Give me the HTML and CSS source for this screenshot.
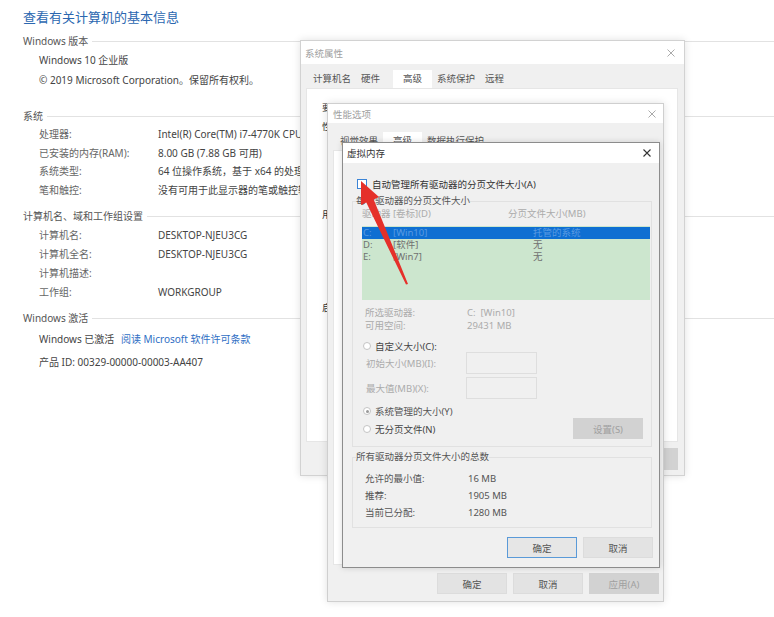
FILE: index.html
```html
<!DOCTYPE html>
<html lang="zh-CN">
<head>
<meta charset="utf-8">
<title>系统</title>
<link rel="stylesheet" href="styles.css">
</head>
<body>
<main class="page">
  <h1 class="title">查看有关计算机的基本信息</h1>

  <section class="sec sec-edition">
    <div class="sec-head"><span>Windows 版本</span></div>
    <div class="rows">
      <div class="row">Windows 10 企业版</div>
      <div class="row">© 2019 Microsoft Corporation。保留所有权利。</div>
    </div>
  </section>

  <section class="sec sec-system">
    <div class="sec-head"><span>系统</span></div>
    <dl class="kv">
      <div class="kv-row"><dt>处理器:</dt><dd>Intel(R) Core(TM) i7-4770K CPU @ 3.50GHz</dd></div>
      <div class="kv-row"><dt>已安装的内存(RAM):</dt><dd>8.00 GB (7.88 GB 可用)</dd></div>
      <div class="kv-row"><dt>系统类型:</dt><dd>64 位操作系统，基于 x64 的处理器</dd></div>
      <div class="kv-row"><dt>笔和触控:</dt><dd>没有可用于此显示器的笔或触控输入</dd></div>
    </dl>
  </section>

  <section class="sec sec-network">
    <div class="sec-head"><span>计算机名、域和工作组设置</span></div>
    <dl class="kv">
      <div class="kv-row"><dt>计算机名:</dt><dd>DESKTOP-NJEU3CG</dd></div>
      <div class="kv-row"><dt>计算机全名:</dt><dd>DESKTOP-NJEU3CG</dd></div>
      <div class="kv-row"><dt>计算机描述:</dt><dd></dd></div>
      <div class="kv-row"><dt>工作组:</dt><dd>WORKGROUP</dd></div>
    </dl>
  </section>

  <section class="sec sec-activation">
    <div class="sec-head"><span>Windows 激活</span></div>
    <div class="act-row">Windows 已激活 <span class="link">阅读 Microsoft 软件许可条款</span></div>
    <div class="act-row">产品 ID: 00329-00000-00003-AA407</div>
  </section>
</main>

<!-- 系统属性 -->
<div class="win win-sys">
  <div class="win-bar bar-sys">
    <span class="win-title">系统属性</span>
    <svg class="win-x" width="8" height="8" viewBox="0 0 8 8"><path d="M0.5 0.5L7.5 7.5M7.5 0.5L0.5 7.5" stroke="currentColor" stroke-width="1"/></svg>
  </div>
  <div class="tabs tabs-sys">
    <span class="tab">计算机名</span>
    <span class="tab">硬件</span>
    <span class="tab active">高级</span>
    <span class="tab">系统保护</span>
    <span class="tab">远程</span>
  </div>
  <div class="panel panel-sys">
    <p class="ptxt p1">要</p>
    <p class="ptxt p2">性</p>
    <p class="ptxt p3">用</p>
    <p class="ptxt p4">启</p>
  </div>
  <div class="btns btns-sys">
    <span class="btn disabled"></span>
  </div>
</div>

<!-- 性能选项 -->
<div class="win win-perf">
  <div class="win-bar bar-perf">
    <span class="win-title">性能选项</span>
    <svg class="win-x" width="8" height="8" viewBox="0 0 8 8"><path d="M0.5 0.5L7.5 7.5M7.5 0.5L0.5 7.5" stroke="currentColor" stroke-width="1"/></svg>
  </div>
  <div class="tabs tabs-perf">
    <span class="tab">视觉效果</span>
    <span class="tab active">高级</span>
    <span class="tab">数据执行保护</span>
  </div>
  <div class="panel panel-perf"></div>
  <div class="btns btns-perf">
    <span class="btn">确定</span>
    <span class="btn">取消</span>
    <span class="btn disabled">应用(A)</span>
  </div>
</div>

<!-- 虚拟内存 -->
<div class="win win-vm">
  <div class="win-bar bar-vm">
    <span class="win-title vm-title">虚拟内存</span>
    <svg class="win-x vm-x" width="8" height="8" viewBox="0 0 8 8"><path d="M0.5 0.5L7.5 7.5M7.5 0.5L0.5 7.5" stroke="currentColor" stroke-width="1.1"/></svg>
  </div>
  <div class="vm-body">
    <div class="check-row">
      <span class="checkbox"></span>
      <span>自动管理所有驱动器的分页文件大小(A)</span>
    </div>

    <fieldset class="gb gb-drives">
      <legend>每个驱动器的分页文件大小</legend>
      <div class="gb-inner">
        <div class="list-head">
          <span class="lh-drive">驱动器 [卷标](D)</span>
          <span>分页文件大小(MB)</span>
        </div>
        <div class="list">
          <div class="li selected"><span class="c-l">C:</span><span class="c-n">[Win10]</span><span>托管的系统</span></div>
          <div class="li"><span class="c-l">D:</span><span class="c-n">[软件]</span><span>无</span></div>
          <div class="li"><span class="c-l">E:</span><span class="c-n">[Win7]</span><span>无</span></div>
        </div>
        <div class="info">
          <div class="info-row"><span class="info-k">所选驱动器:</span><span>C:&nbsp;&nbsp;[Win10]</span></div>
          <div class="info-row"><span class="info-k">可用空间:</span><span>29431 MB</span></div>
        </div>
        <div class="radio-row r-custom"><span class="radio"></span><span>自定义大小(C):</span></div>
        <div class="input-row ir1"><span class="input-k">初始大小(MB)(I):</span><span class="input"></span></div>
        <div class="input-row ir2"><span class="input-k">最大值(MB)(X):</span><span class="input"></span></div>
        <div class="radio-row r-system"><span class="radio on"></span><span>系统管理的大小(Y)</span></div>
        <div class="radio-row r-none">
          <span class="radio"></span><span>无分页文件(N)</span>
          <span class="btn disabled set-btn">设置(S)</span>
        </div>
      </div>
    </fieldset>

    <fieldset class="gb gb-total">
      <legend>所有驱动器分页文件大小的总数</legend>
      <div class="total">
        <div class="t-row"><span class="t-k">允许的最小值:</span><span>16 MB</span></div>
        <div class="t-row"><span class="t-k">推荐:</span><span>1905 MB</span></div>
        <div class="t-row"><span class="t-k">当前已分配:</span><span>1280 MB</span></div>
      </div>
    </fieldset>

    <div class="btns btns-vm">
      <span class="btn default">确定</span>
      <span class="btn">取消</span>
    </div>
  </div>
</div>

<svg class="arrow" width="774" height="617" viewBox="0 0 774 617">
  <polygon points="361,181 379,197 373.7,199.4 408,284 406,284.5 366.3,202.6 361,205" fill="#e5302a"/>
</svg>
</body>
</html>
```

FILE: styles.css
```css
* { box-sizing: border-box; }

html, body {
  margin: 0;
  padding: 0;
  background: #fff;
}

body {
  position: relative;
  width: 774px;
  height: 617px;
  overflow: hidden;
  font-family: "Noto Sans", "Noto Sans CJK SC", sans-serif;
  font-size: 10px;
  color: #444;
}

/* ---------- background page ---------- */
.page {
  padding: 7px 0 0 23px;
}

.title {
  margin: 0;
  font-size: 13px;
  font-weight: normal;
  line-height: 20px;
  color: #2b67b0;
}

.sec-head {
  display: flex;
  align-items: center;
  height: 16px;
  line-height: 16px;
  color: #555;
  white-space: nowrap;
}

.sec-head::after {
  content: "";
  flex: 1;
  border-top: 1px solid #e2e2e2;
  margin-left: 4px;
}

.sec-edition { margin-top: 6px; }
.sec-edition .rows { margin-top: 1px; padding-left: 16px; }
.sec-edition .row { line-height: 20px; white-space: nowrap; }

.kv {
  margin: 1px 0 0;
  padding-left: 16px;
}

.kv-row {
  display: flex;
  white-space: nowrap;
}

.kv dt {
  width: 119px;
  flex: none;
  color: #666;
}

.kv dd {
  margin: 0;
  color: #444;
}

.sec-system .kv-row { line-height: 18.5px; }
.sec-system { margin-top: 18px; }

.sec-network { margin-top: 9px; }
.sec-network .kv { margin-top: 1.5px; }
.sec-network .kv-row { line-height: 19px; height: 19px; }

.sec-activation { margin-top: 8.5px; }

.act-row {
  padding-left: 16px;
  line-height: 20px;
  margin-top: 3px;
  white-space: nowrap;
}

.link {
  color: #2f6fc4;
  margin-left: 4px;
}

/* ---------- windows ---------- */
.win {
  position: absolute;
  display: flex;
  flex-direction: column;
  background: #f0f0f0;
  border: 1px solid #d2d2d2;
  box-shadow: 0 0 8px rgba(0, 0, 0, 0.12);
  font-size: 9.5px;
  color: #444;
  white-space: nowrap;
}

.win-bar {
  flex: none;
  display: flex;
  align-items: center;
  justify-content: space-between;
  background: #fff;
}

.win-title { color: #a0a0a0; }
.win-x { color: #aaa; display: block; }

.tabs {
  flex: none;
  display: flex;
  height: 18px;
  line-height: 18px;
}

.tab {
  padding: 0 5px;
  color: #555;
}

.tab.active {
  background: #fff;
  padding: 0 10px;
}

.panel {
  flex: 1;
  background: #fff;
  border: 1px solid #e6e6e6;
}

.btns {
  flex: none;
  display: flex;
  justify-content: flex-end;
  gap: 6px;
}

.btn {
  display: flex;
  align-items: center;
  justify-content: center;
  width: 70px;
  height: 21px;
  background: #e3e3e3;
  border: 1px solid #dcdcdc;
  color: #555;
}

.btn.disabled {
  background: #d2d2d2;
  border-color: #d2d2d2;
  color: #a0a0a0;
}

.btn.default {
  border-color: #5a9ad8;
  background: #e6e6e6;
}

/* 系统属性 */
.win-sys {
  left: 300px;
  top: 40px;
  width: 385px;
  height: 436px;
}

.bar-sys { height: 23px; padding: 0 9px 0 4px; }

.tabs-sys {
  margin-top: 6px;
  padding-left: 7px;
}

.tabs-sys .tab:nth-child(2) { margin-right: 8px; }

.panel-sys {
  margin: 0 6px 0 5px;
  padding: 12px 0 0 15px;
  overflow: hidden;
}

.ptxt {
  margin: 0;
  line-height: 14px;
  color: #333;
}

.p2 { margin-top: 5px; }
.p3 { margin-top: 74px; }
.p4 { margin-top: 79px; }

.btns-sys { padding: 6px 6px 5px; }
.btns-sys .btn { height: 22px; }

/* 性能选项 */
.win-perf {
  left: 327px;
  top: 103px;
  width: 337px;
  height: 499px;
  border-color: #cfcfcf;
}

.bar-perf { height: 19px; padding: 0 7px 0 5px; }

.tabs-perf {
  margin-top: 9px;
  padding-left: 7px;
}

.panel-perf { margin: 0 5px 8px 5px; }

.btns-perf { padding: 0 4px 7px; }

/* 虚拟内存 */
.win-vm {
  left: 342px;
  top: 142px;
  width: 318px;
  border-color: #8c8c8c;
  box-shadow: 0 0 6px rgba(0, 0, 0, 0.15);
}

.bar-vm { height: 20px; padding: 0 8px 0 4px; }
.vm-title { color: #333; }
.vm-x { color: #333; }

.vm-body {
  display: flex;
  flex-direction: column;
  padding: 14px 6px 9px 9px;
}

.check-row {
  display: flex;
  align-items: center;
  height: 14px;
  padding-left: 5px;
  gap: 5px;
  color: #333;
}

.checkbox {
  width: 10px;
  height: 10px;
  border: 1px solid #3b84d6;
  background: #fff;
}

.gb {
  margin: 0 1px 0 0;
  border: 1px solid #e1e1e1;
  padding: 0 1px 7px 3px;
  min-width: 0;
}

.gb legend {
  padding: 0;
  line-height: 14px;
  color: #555;
}

.gb-drives { margin-top: 3px; }

.gb-inner { padding-left: 6px; }

.list-head {
  display: flex;
  height: 12px;
  line-height: 12px;
  color: #ababab;
}

.lh-drive { width: 146px; }

.list {
  margin-top: 6px;
  height: 74px;
  padding-top: 1px;
  background: #cce6ce;
}

.li {
  display: flex;
  height: 12px;
  line-height: 12px;
  padding-left: 1px;
  color: #707070;
}

.li.selected {
  background: #0f6fd2;
  color: #5a9be2;
}

.c-l { width: 30px; }
.c-n { width: 140px; }

.info { margin-top: 5.5px; padding-left: 3px; color: #ababab; }

.info-row {
  display: flex;
  line-height: 13px;
}

.info-k { width: 102px; }

.radio-row {
  display: flex;
  align-items: center;
  gap: 4px;
  height: 12px;
  padding-left: 1px;
  color: #444;
}

.radio {
  position: relative;
  width: 8px;
  height: 8px;
  border: 1px solid #c4c4c4;
  border-radius: 50%;
  background: #fff;
}

.radio.on::after {
  content: "";
  position: absolute;
  left: 1.5px;
  top: 1.5px;
  width: 3px;
  height: 3px;
  border-radius: 50%;
  background: #999;
}

.r-custom { margin-top: 8.5px; }
.r-system { margin-top: 6px; color: #555; }

.r-none {
  margin-top: 1px;
  height: 21px;
  padding-right: 7px;
}

.set-btn { margin-left: auto; }

.input-row {
  display: flex;
  align-items: center;
  padding-left: 4px;
  color: #ababab;
}

.ir1 { height: 22px; }
.ir2 { height: 22px; margin-top: 3px; }

.input-k { width: 100px; }

.input {
  width: 71px;
  height: 100%;
  border: 1px solid #dedede;
  background: #f0f0f0;
}

.gb-total { margin-top: 3px; padding-bottom: 6.5px; }

.total { margin-top: 5.5px; padding-left: 9px; color: #555; }

.t-row {
  display: flex;
  line-height: 17px;
}

.t-k { width: 103px; }

.btns-vm { margin-top: 9px; }

/* annotation arrow */
.arrow {
  position: absolute;
  left: 0;
  top: 0;
  pointer-events: none;
}
```
